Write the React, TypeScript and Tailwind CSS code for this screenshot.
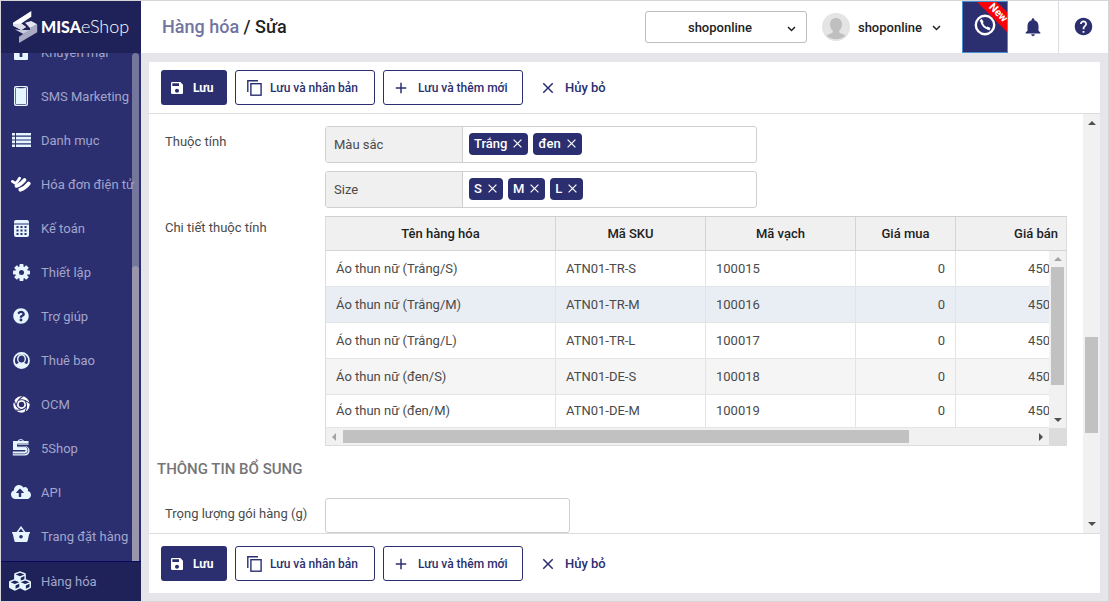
import { useState } from 'react'
import type { ReactNode } from 'react'
import { FaQuestionCircle, FaCloudUploadAlt, FaCubes } from 'react-icons/fa'
import { MdSave, MdAdd, MdClose, MdNotifications, MdHelp } from 'react-icons/md'

interface Variant {
  name: string
  sku: string
  barcode: string
  buyPrice: string
  sellPrice: string
}

const VARIANTS: Variant[] = [
  { name: 'Áo thun nữ (Trắng/S)', sku: 'ATN01-TR-S', barcode: '100015', buyPrice: '0', sellPrice: '450' },
  { name: 'Áo thun nữ (Trắng/M)', sku: 'ATN01-TR-M', barcode: '100016', buyPrice: '0', sellPrice: '450' },
  { name: 'Áo thun nữ (Trắng/L)', sku: 'ATN01-TR-L', barcode: '100017', buyPrice: '0', sellPrice: '450' },
  { name: 'Áo thun nữ (đen/S)', sku: 'ATN01-DE-S', barcode: '100018', buyPrice: '0', sellPrice: '450' },
  { name: 'Áo thun nữ (đen/M)', sku: 'ATN01-DE-M', barcode: '100019', buyPrice: '0', sellPrice: '450' },
]

function GiftIcon() {
  return (
    <svg width="16" height="16" viewBox="0 0 16 16" fill="#e6f6ff">
      <path d="M0 4h16v5H0zM1 9h14v6a1 1 0 0 1-1 1H2a1 1 0 0 1-1-1z" />
      <path d="M7.400 4V1.800Q5 .2 3.600 2.200 3.400 3.800 5 4zM8.600 4V1.800Q11 .2 12.400 2.200 12.600 3.800 11 4z" />
      <path d="M6.600 8.500h2.800V13H6.600z" fill="#2b2f70" />
    </svg>
  )
}

function PhoneIcon() {
  return (
    <svg width="14" height="20" viewBox="0 0 14 20">
      <rect width="14" height="20" rx="2" fill="#e6f6ff" />
      <rect x="1.5" y="1.5" width="11" height="17" rx="1" fill="none" stroke="#2b2f70" strokeWidth="0.7" />
      <path d="M4.5 1.6h5" stroke="#2b2f70" strokeWidth="1.2" />
    </svg>
  )
}

function ListIcon() {
  return (
    <svg width="19" height="14" viewBox="0 0 19 14" fill="#e6f6ff">
      <path d="M0 0h3v2.600H0zM4 0h15v2.600H4zM0 3.800h3v2.600H0zM4 3.800h15v2.600H4zM0 7.600h3v2.600H0zM4 7.600h15v2.600H4zM0 11.400h3V14H0zM4 11.400h15V14H4z" />
    </svg>
  )
}

function InvoiceIcon() {
  return (
    <svg width="20" height="16" viewBox="0 0 20 16" fill="none" stroke="#fff" strokeLinecap="round">
      <path d="M1.400 5.400L4.400 7.400Q6.600 6 8.600 2.200" strokeWidth="2.800" />
      <path d="M5.400 10Q10 8.400 13.600 3.800" strokeWidth="3.600" />
      <path d="M9.400 13.600Q14 12.400 17.600 7.600" strokeWidth="4" />
    </svg>
  )
}

function CalculatorIcon() {
  return (
    <svg width="15" height="17" viewBox="0 0 15 17">
      <path d="M2 0h11a2 2 0 0 1 2 2v1.5H0V2a2 2 0 0 1 2-2zM0 4.5h15V15a2 2 0 0 1-2 2H2a2 2 0 0 1-2-2z" fill="#e6f6ff" />
      <path
        d="M2.500 6h2v2h-2zM6.500 6h2v2h-2zM10.500 6h2v2h-2zM2.500 9.500h2v2h-2zM6.500 9.500h2v2h-2zM10.500 9.500h2v2h-2zM2.500 13h2v2h-2zM6.500 13h2v2h-2zM10.500 13h2v2h-2z"
        fill="#2b2f70"
      />
    </svg>
  )
}

function GearIcon() {
  return (
    <svg width="17" height="17" viewBox="0 0 17 17" fill="#e6f6ff">
      {[0, 45, 90, 135].map((deg) => (
        <rect key={deg} x="6.500" y="0" width="4" height="17" rx=".8" transform={`rotate(${deg} 8.5 8.5)`} />
      ))}
      <circle cx="8.500" cy="8.500" r="6.200" />
      <circle cx="8.500" cy="8.500" r="2.500" fill="#2b2f70" />
    </svg>
  )
}

function UserIcon() {
  return (
    <svg width="17" height="17" viewBox="0 0 17 17" fill="none" stroke="#e6f6ff">
      <circle cx="8.500" cy="8.500" r="7.500" strokeWidth="1.800" />
      <path d="M2.600 12.600Q8.500 8.600 14.400 12.600 12 16 8.500 16T2.600 12.600z" fill="#e6f6ff" stroke="none" />
      <ellipse cx="8.500" cy="7" rx="3.800" ry="4.200" fill="#2b2f70" strokeWidth="1.400" />
    </svg>
  )
}

function SwirlIcon() {
  return (
    <svg width="17" height="17" viewBox="0 0 17 17" fill="none" stroke="#2b2f70">
      <circle cx="8.500" cy="8.500" r="8.200" fill="#fff" stroke="none" />
      {[0, 72, 144, 216, 288].map((deg) => (
        <path key={deg} d="M3.600 9.400Q3.600 4.200 10 .4" strokeWidth="1.100" transform={`rotate(${deg} 8.5 8.5)`} />
      ))}
      <circle cx="8.500" cy="8.500" r="3.400" fill="#2b2f70" stroke="#fff" strokeWidth="1.200" />
    </svg>
  )
}

function FiveShopIcon() {
  return (
    <svg width="18" height="18" viewBox="0 0 18 18" fill="none" stroke="#e6f6ff">
      <path d="M6 2.500Q6.200.6 8.800.6T11.600 2.500" strokeWidth="1" />
      <path d="M16.500 4H3v5h9.800a2.800 2.800 0 0 1 0 5.600H.8" strokeWidth="4" />
      <path d="M16.500 5H5.500v2.600h8q2.400.6 2.400 3.800 0 3.400-3.400 3.400H.8" stroke="#2b2f70" strokeWidth=".7" />
    </svg>
  )
}

function BasketIcon() {
  return (
    <svg width="18" height="16" viewBox="0 0 18 16" className="mb-1">
      <path d="M5.200 6.400L9 1.200l3.800 5.200" fill="none" stroke="#e6f6ff" strokeWidth="1.500" />
      <path d="M0 6h18v1.400h-.7L15.600 15q-.2 1-1.200 1H3.600q-1 0-1.200-1L.7 7.400H0z" fill="#e6f6ff" />
      <circle cx="9" cy="10.800" r="1.800" fill="#2b2f70" />
    </svg>
  )
}

function CopyIcon() {
  return (
    <svg width="15" height="16" viewBox="0 0 15 16" fill="none" stroke="#2b2f70">
      <path d="M.8 12V.8H11" strokeWidth="1.400" />
      <rect x="3.900" y="3.700" width="10.200" height="11.500" strokeWidth="1.400" />
    </svg>
  )
}

function CallIcon() {
  return (
    <svg width="22" height="22" viewBox="0 0 22 22" fill="none" stroke="#fff">
      <circle cx="11" cy="11" r="9.200" strokeWidth="2.400" />
      <path d="M7.400 7Q8 13 15 14.800" strokeWidth="2" />
      <path d="M6.800 5.600l1.800 3.200M12.600 13.600l3.400 1.600" strokeWidth="2.600" />
    </svg>
  )
}

function LogoMark() {
  return (
    <svg width="25" height="32" viewBox="0 0 25 32">
      <path d="M18.300 0v5.800L8.200 12.600 13 16l-4.600 3L0 14.500V11.800z" fill="#fff" />
      <path d="M0 13l8.200-.4L13 16l-4.600 3L0 14.800z" fill="#dcdde8" />
      <path d="M12 11.800l6.200-1.800 6 3.200-7 4z" fill="#e4e5ee" />
      <path d="M24.200 13.200v8L6 32v-6.200l11-7V17z" fill="#a9abc4" />
      <path d="M2 18.600l6.400.4 8.600 0-6.600 4z" fill="#c9cadb" />
    </svg>
  )
}

const MENU: { label: string; icon: ReactNode }[] = [
  { label: 'Khuyến mại', icon: <GiftIcon /> },
  { label: 'SMS Marketing', icon: <PhoneIcon /> },
  { label: 'Danh mục', icon: <ListIcon /> },
  { label: 'Hóa đơn điện tử', icon: <InvoiceIcon /> },
  { label: 'Kế toán', icon: <CalculatorIcon /> },
  { label: 'Thiết lập', icon: <GearIcon /> },
  { label: 'Trợ giúp', icon: <FaQuestionCircle size={16} /> },
  { label: 'Thuê bao', icon: <UserIcon /> },
  { label: 'OCM', icon: <SwirlIcon /> },
  { label: '5Shop', icon: <FiveShopIcon /> },
  { label: 'API', icon: <FaCloudUploadAlt size={20} /> },
  { label: 'Trang đặt hàng', icon: <BasketIcon /> },
]

function MenuItem({ label, icon }: { label: string; icon: ReactNode }) {
  return (
    <a href="#" className="flex h-11 shrink-0 items-center whitespace-nowrap text-[13px] text-[#a3a5cb]">
      <span className="flex w-10 shrink-0 justify-center pb-0.5 text-[#e6f6ff]">{icon}</span>
      {label}
    </a>
  )
}

function Sidebar() {
  return (
    <aside className="flex w-[140px] shrink-0 flex-col bg-[#2b2f70]">
      <div className="flex h-[52px] shrink-0 items-center bg-[#1e2258] pl-3 text-white">
        <LogoMark />
        <span className="ml-[3px] flex items-baseline whitespace-nowrap pb-0.5 font-['Lato']">
          <b className="text-base font-black">MISA</b>
          <span className="text-lg font-light">eShop</span>
        </span>
      </div>
      <nav className="relative flex min-h-0 flex-1 flex-col justify-end overflow-hidden pb-0.5">
        {MENU.map((item) => (
          <MenuItem key={item.label} {...item} />
        ))}
        <div className="absolute inset-y-0 right-0.5 flex w-[7px] flex-col rounded-t bg-[#a6a6b8]/60">
          <div className="mt-auto h-[58%] rounded-t bg-[#b0aab8]/60" />
        </div>
      </nav>
      <a
        href="#"
        className="flex h-10 shrink-0 items-center border-t border-[#0a0a5c] bg-[#1e2258] text-[13px] text-[#a3a5cb]"
      >
        <span className="flex w-10 shrink-0 justify-center pb-0.5 pr-0.5 text-[#e6f6ff]">
          <FaCubes size={22} />
        </span>
        Hàng hóa
      </a>
    </aside>
  )
}

function Chevron() {
  return (
    <svg width="9" height="6" viewBox="0 0 9 6" fill="none" stroke="#222" strokeWidth="1.500">
      <path d="M1 1l3.500 3.500L8 1" />
    </svg>
  )
}

function Header() {
  return (
    <header className="flex h-[52px] shrink-0 items-center bg-white">
      <h1 className="flex-1 pl-[21px] text-lg font-medium text-[#1f1f1f]">
        <span className="text-[#7274a0]">Hàng hóa</span> / Sửa
      </h1>
      <div className="relative">
        <select
          aria-label="Cửa hàng"
          className="h-8 w-[162px] appearance-none rounded-[3px] border border-[#bdbdbd] bg-white pl-[42px] pt-px text-[13px] font-medium text-[#222]"
        >
          <option>shoponline</option>
        </select>
        <span className="pointer-events-none absolute inset-y-0 right-[11px] flex items-center pt-1">
          <Chevron />
        </span>
      </div>
      <button type="button" className="ml-[15px] flex items-center text-[13px] font-medium text-[#222]">
        <svg width="28" height="28" viewBox="0 0 28 28" className="mr-2">
          <circle cx="14" cy="14" r="14" fill="#e4e4e4" />
          <path
            d="M14 5c3.600 0 6 2.500 6 6.200 0 3-1.300 5.300-2.800 6.400v2l6.300 3A14 14 0 0 1 4.500 22.600l6.300-3v-2C9.300 16.500 8 14.200 8 11.200 8 7.500 10.400 5 14 5z"
            fill="#bfbfbf"
          />
        </svg>
        <span className="flex items-center gap-2.5 pt-0.5">
          shoponline
          <Chevron />
        </span>
      </button>
      <button
        type="button"
        aria-label="Hotline"
        className="relative ml-[21px] flex h-full w-[46px] justify-center overflow-hidden border border-[#4c8fd0] bg-[#2b2f70] pt-3"
      >
        <CallIcon />
        <span className="absolute -right-[26px] top-1 w-[70px] rotate-45 bg-[#fb0007] text-center text-[11px] font-bold leading-[14px] text-white">
          New
        </span>
      </button>
      <button type="button" aria-label="Thông báo" className="flex h-full w-[50px] items-center justify-center text-[#2b2f70]">
        <MdNotifications size={22} />
      </button>
      <button
        type="button"
        aria-label="Trợ giúp"
        className="flex h-full w-[50px] items-center justify-center border-l border-[#dcdce2] pb-0.5 text-[#2b2f70]"
      >
        <MdHelp size={21} />
      </button>
    </header>
  )
}

function ActionButtons() {
  return (
    <div className="flex gap-2 px-3 text-xs font-medium text-[#2b2f70]">
      <button type="button" className="flex h-[35px] w-[66px] items-center gap-2 rounded-[3px] bg-[#2b2f70] pl-2 font-bold text-white">
        <MdSave size={16} />
        Lưu
      </button>
      <button
        type="button"
        className="flex h-[35px] w-[140px] items-center gap-2 whitespace-nowrap rounded-[3px] border border-[#2b2f70] pl-[11px]"
      >
        <CopyIcon />
        Lưu và nhân bản
      </button>
      <button
        type="button"
        className="flex h-[35px] w-[140px] items-center gap-2 whitespace-nowrap rounded-[3px] border border-[#2b2f70] pl-2"
      >
        <MdAdd size={18} />
        Lưu và thêm mới
      </button>
      <button type="button" className="flex h-[35px] items-center gap-2 whitespace-nowrap pl-2 text-[13px]">
        <MdClose size={18} />
        Hủy bỏ
      </button>
    </div>
  )
}

interface TagFieldProps {
  id: string
  label: string
  initial: string[]
}

function TagField({ id, label, initial }: TagFieldProps) {
  const [tags, setTags] = useState(initial)

  return (
    <div className="flex h-[37px] w-[432px] rounded-[3px] border border-[#cfcfcf]">
      <label htmlFor={id} className="flex w-[137px] shrink-0 items-center border-r border-[#cfcfcf] bg-[#f0f0f0] pl-2">
        {label}
      </label>
      <div className="flex flex-1 items-start gap-[5px] pl-1.5 pt-1.5">
        {tags.map((tag) => (
          <span key={tag} className="flex h-[22px] items-center rounded-sm bg-[#2b2f70] pl-[5px] font-medium text-white">
            {tag}
            <button
              type="button"
              aria-label={`Xóa ${tag}`}
              className="px-1.5 pb-0.5"
              onClick={() => setTags((prev) => prev.filter((t) => t !== tag))}
            >
              <svg width="9" height="9" viewBox="0 0 9 9" stroke="#fff" strokeWidth="1.200">
                <path d="M.6.6l7.800 7.800M8.400.6L.6 8.400" />
              </svg>
            </button>
          </span>
        ))}
        <input id={id} type="text" className="w-0 flex-1 outline-none" />
      </div>
    </div>
  )
}

function Arrow({ dir, color }: { dir: 'up' | 'down' | 'left' | 'right'; color: string }) {
  const points = {
    up: '0,6 8,6 4,2',
    down: '0,2 8,2 4,6',
    left: '6,0 6,8 2,4',
    right: '2,0 2,8 6,4',
  }
  return (
    <svg width="8" height="8" viewBox="0 0 8 8" className="shrink-0">
      <polygon points={points[dir]} fill={color} />
    </svg>
  )
}

function VariantTable() {
  return (
    <div className="relative border border-[#dcdcdc] border-t-[#cfcfcf]">
      <table className="w-full table-fixed border-separate border-spacing-0">
        <thead>
          <tr className="h-[34px] bg-[#f0f0f0] text-[#222]">
            <th className="w-[230px] border-b border-r border-[#d4d4d4] font-medium">Tên hàng hóa</th>
            <th className="w-[150px] border-b border-r border-[#d4d4d4] font-medium">Mã SKU</th>
            <th className="w-[150px] border-b border-r border-[#d4d4d4] font-medium">Mã vạch</th>
            <th className="w-[100px] border-b border-r border-[#d4d4d4] font-medium">Giá mua</th>
            <th className="border-b border-[#d4d4d4] pr-2 text-right font-medium">Giá bán</th>
          </tr>
        </thead>
        <tbody>
          {VARIANTS.map((v, i) => (
            <tr
              key={v.sku}
              className={`h-9 last:h-[33px] ${i === 1 ? 'bg-[#e9eef4]' : i === 3 ? 'bg-[#f5f5f5]' : 'bg-white'}`}
            >
              <td className="border-b border-r border-[#e2e5e8] pl-2.5">{v.name}</td>
              <td className="border-b border-r border-[#e2e5e8] pl-2.5">{v.sku}</td>
              <td className="border-b border-r border-[#e2e5e8] pl-2.5">{v.barcode}</td>
              <td className="border-b border-r border-[#e2e5e8] pr-2.5 text-right">{v.buyPrice}</td>
              <td className="border-b border-[#e2e5e8] pr-4 text-right">{v.sellPrice}</td>
            </tr>
          ))}
        </tbody>
      </table>
      <div className="absolute bottom-[17px] right-0 top-[34px] flex w-[17px] flex-col items-center justify-between bg-[#f1f1f1] py-1">
        <Arrow dir="up" color="#a3a3a3" />
        <div className="mb-auto mt-1 h-[118px] w-[13px] bg-[#c1c1c1]" />
        <Arrow dir="down" color="#505050" />
      </div>
      <div className="flex h-[17px] bg-[#f1f1f1]">
        <div className="flex flex-1 items-center gap-[5px] px-1">
          <Arrow dir="left" color="#a3a3a3" />
          <div className="mr-auto h-[13px] w-[566px] bg-[#c1c1c1]" />
          <Arrow dir="right" color="#505050" />
        </div>
        <div className="w-[17px] bg-[#dcdcdc]" />
      </div>
    </div>
  )
}

export default function App() {
  return (
    <div className="flex h-screen overflow-hidden border border-[#d6d6da] bg-[#e5e5ea] font-['Roboto','Noto_Sans',sans-serif]">
      <Sidebar />
      <div className="flex min-w-0 flex-1 flex-col">
        <Header />
        <main className="mb-2 ml-2 mr-2 mt-[9px] flex min-h-0 flex-1 flex-col bg-white">
          <div className="shrink-0 border-b border-[#dcdcdf] py-2">
            <ActionButtons />
          </div>
          <form className="flex min-h-0 flex-1 text-[13px] text-[#4a4a4a]">
            <div className="min-w-0 flex-1 overflow-hidden pl-2 pr-4 pt-3">
              <div className="flex">
                <div className="w-[168px] shrink-0 pl-2 pt-1.5">Thuộc tính</div>
                <div className="flex flex-col gap-2">
                  <TagField id="mau-sac" label="Màu sắc" initial={['Trắng', 'đen']} />
                  <TagField id="size" label="Size" initial={['S', 'M', 'L']} />
                </div>
              </div>
              <div className="mt-2 flex">
                <div className="w-[168px] shrink-0 pl-2 pt-0.5">Chi tiết thuộc tính</div>
                <div className="min-w-0 flex-1">
                  <VariantTable />
                </div>
              </div>
              <h2 className="mt-3 text-[15px] font-medium leading-[22px] text-[#757575]">THÔNG TIN BỔ SUNG</h2>
              <div className="mt-[18px] flex">
                <label htmlFor="weight" className="w-[168px] shrink-0 pl-2 pt-1.5">
                  Trọng lượng gói hàng (g)
                </label>
                <input
                  id="weight"
                  type="text"
                  className="h-[35px] w-[245px] rounded-[3px] border border-[#cfcfcf] px-2 outline-none"
                />
              </div>
            </div>
            <div className="flex w-[17px] shrink-0 flex-col items-center bg-[#f1f1f1] py-[5px]">
              <Arrow dir="up" color="#505050" />
              <div className="flex flex-1 flex-col items-center">
                <div className="flex-[210]" />
                <div className="h-24 w-[13px] bg-[#c1c1c1]" />
                <div className="flex-[87]" />
              </div>
              <Arrow dir="down" color="#505050" />
            </div>
          </form>
          <div className="shrink-0 border-t border-[#dcdcdf] py-3">
            <ActionButtons />
          </div>
        </main>
      </div>
    </div>
  )
}
